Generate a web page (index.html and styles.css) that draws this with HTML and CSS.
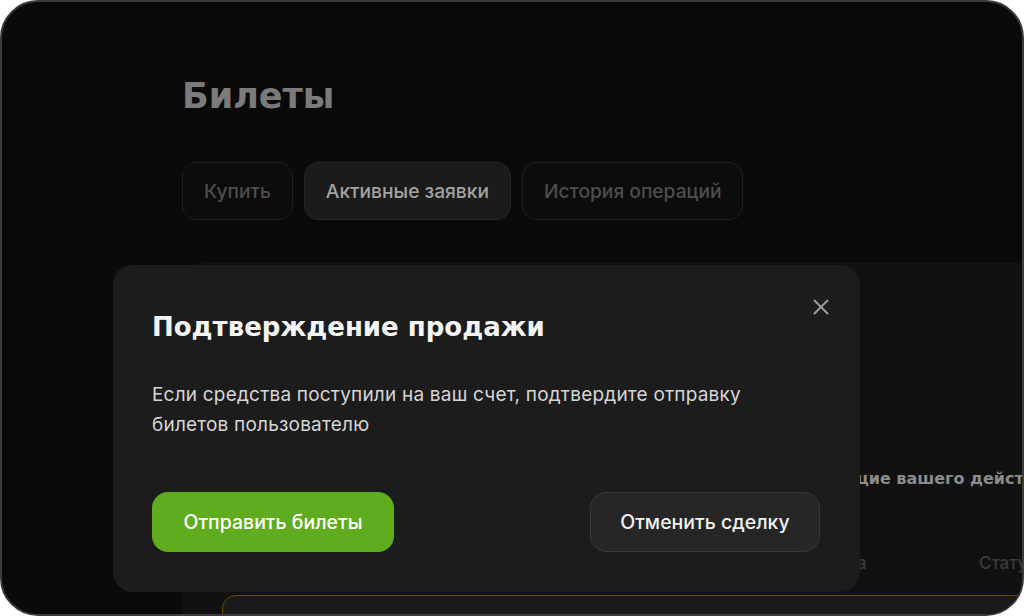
FILE: index.html
```html
<!DOCTYPE html>
<html lang="ru">
<head>
    <meta charset="UTF-8">
    <meta name="viewport" content="width=device-width, initial-scale=1.0">
    <title>Билеты</title>
    <link rel="stylesheet" href="styles.css">
</head>
<body>
    <div class="frame">
        <div class="page">
            <h1 class="page-title">Билеты</h1>

            <div class="tabs">
                <button class="tab">Купить</button>
                <button class="tab active">Активные заявки</button>
                <button class="tab">История операций</button>
            </div>

            <div class="orders">
                <p class="orders-hint">Заявки, требующие вашего действия</p>

                <div class="orders-head">
                    <span>Сумма</span>
                    <span>Статус</span>
                </div>

                <div class="order-row"></div>
            </div>
        </div>

        <!-- Modal -->
        <div class="modal">
            <button class="modal-close" aria-label="Закрыть">
                <svg width="18" height="18" viewBox="0 0 18 18" fill="none">
                    <path d="M2.5 2.5L15.5 15.5M15.5 2.5L2.5 15.5" stroke="#9b9b9b" stroke-width="2" stroke-linecap="round"/>
                </svg>
            </button>
            <h2 class="modal-title">Подтверждение продажи</h2>
            <p class="modal-text">Если средства поступили на ваш счет, подтвердите отправку билетов пользователю</p>
            <div class="modal-actions">
                <button class="btn btn-green">Отправить билеты</button>
                <button class="btn btn-dark">Отменить сделку</button>
            </div>
        </div>
    </div>
</body>
</html>
```

FILE: styles.css
```css
body {
    margin: 0;
    background: #ffffff;
    font-family: Inter, "Noto Sans", sans-serif;
}

.frame {
    position: relative;
    width: 1024px;
    height: 616px;
    box-sizing: border-box;
    border: 2px solid #3c3c3c;
    border-radius: 38px;
    background: #0a0a0a;
    overflow: hidden;
}

.page {
    padding: 74px 0 0 180px;
}

.page-title {
    margin: 0;
    font-family: "DejaVu Sans", sans-serif;
    font-size: 35px;
    font-weight: bold;
    color: #7b7b7b;
}

.tabs {
    display: flex;
    gap: 11px;
    margin-top: 46px;
}

.tab {
    height: 58px;
    padding: 0 21px;
    border: 1px solid #1f1f1f;
    border-radius: 14px;
    background: #0c0c0c;
    font-family: Inter, sans-serif;
    font-size: 19.2px;
    font-weight: 500;
    color: #4d4d4d;
}

.tab.active {
    background: #1b1b1b;
    border-color: #262626;
    color: #a3a3a3;
}

.orders {
    margin-top: 43px;
    width: 900px;
    height: 400px;
    padding: 0 40px;
    background: #111111;
    border-radius: 20px;
}

.orders-hint {
    margin: 0;
    padding-top: 206px;
    padding-left: 484px;
    font-family: "DejaVu Sans", sans-serif;
    font-size: 16px;
    font-weight: bold;
    color: #8c8c8c;
    white-space: nowrap;
}

.orders-head {
    display: flex;
    margin-top: 65px;
    padding-left: 586px;
    font-size: 17px;
    font-weight: 500;
    color: #3c3c3c;
}

.orders-head span:first-child {
    width: 171px;
}

.order-row {
    margin-top: 22px;
    height: 80px;
    border: 1px solid #6a4808;
    border-radius: 14px;
    background: #1a1a1a;
}

.modal {
    position: absolute;
    left: 111px;
    top: 263px;
    width: 747px;
    height: 327px;
    box-sizing: border-box;
    padding: 47px 40px 0 39px;
    background: #1c1c1c;
    border-radius: 20px;
}

.modal-close {
    position: absolute;
    top: 33px;
    right: 30px;
    padding: 0;
    border: none;
    background: none;
    display: flex;
}

.modal-title {
    margin: 0;
    font-family: "DejaVu Sans", sans-serif;
    font-size: 26px;
    font-weight: bold;
    color: #f4f4f4;
}

.modal-text {
    margin: 38px 0 0;
    width: 640px;
    font-size: 19px;
    letter-spacing: 0.2px;
    line-height: 30px;
    color: #d6d6d6;
}

.modal-actions {
    display: flex;
    justify-content: space-between;
    margin-top: 52px;
}

.btn {
    height: 60px;
    border-radius: 16px;
    font-family: Inter, sans-serif;
    font-size: 19.5px;
    font-weight: 500;
    cursor: pointer;
}

.btn-green {
    width: 242px;
    border: none;
    background: #5fac1e;
    color: #ffffff;
}

.btn-dark {
    width: 230px;
    border: 1px solid #383838;
    background: #262626;
    color: #f0f0f0;
}
```
